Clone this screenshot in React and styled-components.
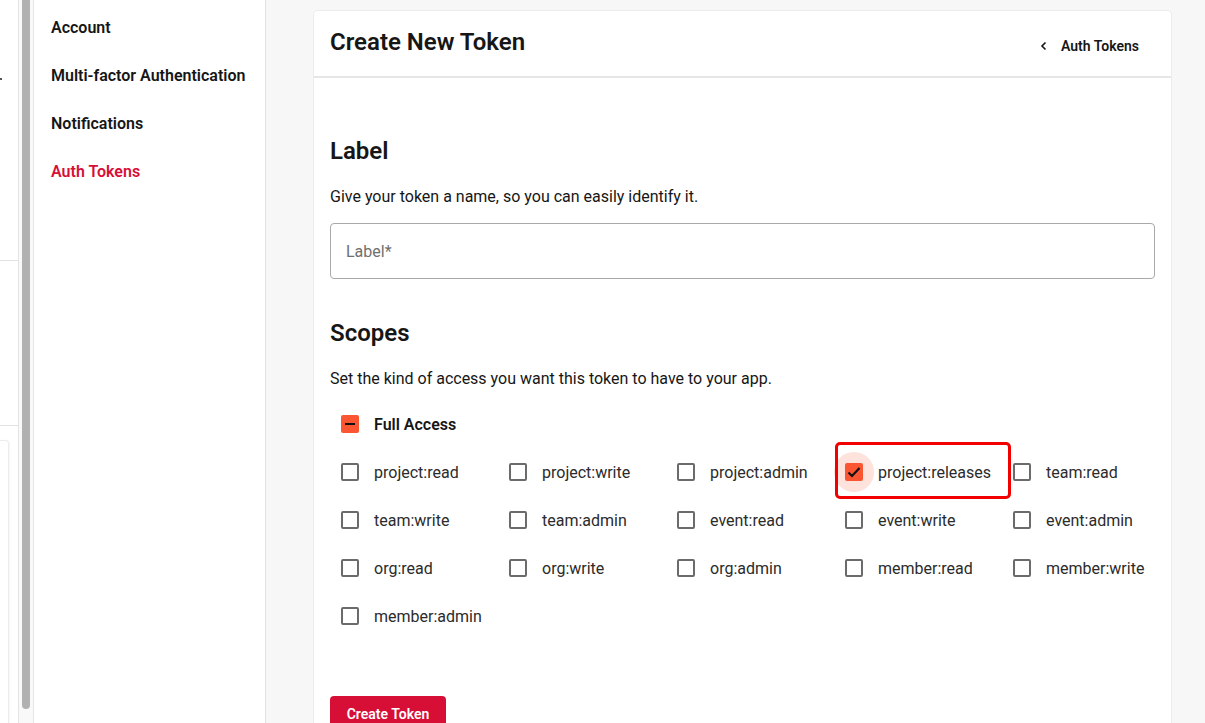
import React from "react";
import styled, { createGlobalStyle } from "styled-components";

const GlobalStyle = createGlobalStyle`
  html, body { margin: 0; padding: 0; }
  body {
    font-family: Roboto, "Liberation Sans", sans-serif;
    color: #161616;
    background: #f7f7f7;
    overflow: hidden;
  }
  * { box-sizing: border-box; }
`;

const Page = styled.div`
  display: flex;
  height: 723px;
  width: 1205px;
  overflow: hidden;
`;

const EdgeStrip = styled.div`
  width: 19px;
  flex: none;
  background: #fff;
  border-right: 1px solid #e4e4e4;
  display: flex;
  flex-direction: column;
`;

const EdgeSection = styled.div`
  height: ${(p) => p.$h}px;
  border-bottom: ${(p) => (p.$line ? "1px solid #e2e2e2" : "none")};
  position: relative;
`;

const EdgeDot = styled.span`
  position: absolute;
  left: 0;
  top: 78px;
  width: 2px;
  height: 2px;
  background: #555;
`;

const EdgeCard = styled.div`
  margin-top: 14px;
  width: 9px;
  flex: 1;
  border-top: 1px solid #ececec;
  border-right: 1px solid #ececec;
  border-top-right-radius: 4px;
  box-shadow: 1px 0 2px rgba(0, 0, 0, 0.04);
`;

const ScrollTrack = styled.div`
  width: 15px;
  flex: none;
  background: #f9f9f9;
  border-right: 1px solid #e6e6e6;
  padding: 0 3px 0 3px;
`;

const ScrollThumb = styled.div`
  width: 8px;
  height: 709px;
  background: #b1b1b1;
  border-radius: 0 0 4px 4px;
`;

const Sidebar = styled.nav`
  width: 232px;
  flex: none;
  background: #fff;
  border-right: 1px solid #e2e2e2;
  padding: 3px 0 0 17px;
  display: flex;
  flex-direction: column;
`;

const NavItem = styled.a`
  height: 48px;
  display: flex;
  align-items: center;
  font-size: 16px;
  font-weight: 600;
  color: ${(p) => (p.$active ? "#d70f37" : "#161616")};
  text-decoration: none;
  cursor: pointer;
`;

const Main = styled.main`
  flex: 1;
  min-width: 0;
  padding: 11px 34px 0 48px;
  background: #f7f7f7;
`;

const Card = styled.section`
  background: #fff;
  border-radius: 4px;
  box-shadow: 0 0 0 1px #ececec, 0 1px 2px rgba(0, 0, 0, 0.04);
  height: 760px;
`;

const CardHeader = styled.header`
  height: 67px;
  display: flex;
  align-items: center;
  justify-content: space-between;
  padding: 0 32px 0 16px;
  border-bottom: 2px solid #e6e6e6;
`;

const Title = styled.h1`
  margin: 0;
  font-size: 24px;
  font-weight: 600;
  line-height: 32px;
  margin-top: -4px;
`;

const BackLink = styled.a`
  display: flex;
  align-items: center;
  gap: 13px;
  font-size: 14px;
  font-weight: 600;
  color: #161616;
  padding: 4px 0;
  margin-top: 4px;
  cursor: pointer;
`;

const CardBody = styled.div`
  padding: 57px 16px 0;
  display: flex;
  flex-direction: column;
`;

const SectionTitle = styled.h2`
  margin: 0;
  font-size: 24px;
  font-weight: 600;
  line-height: 32px;
`;

const Description = styled.p`
  margin: 18px 0 0;
  font-size: 16px;
  line-height: 24px;
  font-weight: 400;
`;

const TextInput = styled.input`
  margin-top: 14px;
  height: 56px;
  width: 100%;
  border: 1px solid #a9a9a9;
  border-radius: 4px;
  padding: 0 15px;
  font-family: inherit;
  font-size: 16px;
  color: #161616;
  outline: none;
  &::placeholder { color: #6f6f6f; }
`;

const ScopesTitle = styled(SectionTitle)`
  margin-top: 38px;
`;

const FullRow = styled.div`
  margin-top: 9px;
  height: 48px;
  display: flex;
  align-items: center;
`;

const ScopeGrid = styled.div`
  display: grid;
  grid-template-columns: repeat(5, 168px);
  grid-auto-rows: 48px;
`;

const ScopeItem = styled.label`
  position: relative;
  display: flex;
  align-items: center;
  font-size: 16px;
  color: #2b2b2b;
  cursor: pointer;
`;

const FullLabel = styled.span`
  font-size: 16px;
  font-weight: 600;
  color: #161616;
`;

const BoxWrap = styled.span`
  width: 40px;
  height: 40px;
  flex: none;
  margin-right: 4px;
  border-radius: 50%;
  display: flex;
  align-items: center;
  justify-content: center;
  background: ${(p) => (p.$ripple ? "#fde3dc" : "transparent")};
`;

const Box = styled.span`
  width: 18px;
  height: 18px;
  border-radius: 2px;
  display: flex;
  align-items: center;
  justify-content: center;
  border: ${(p) => (p.$on ? "none" : "2px solid #6b6b6b")};
  background: ${(p) => (p.$on ? "#fc5531" : "#fff")};
`;

const Highlight = styled.span`
  position: absolute;
  left: 1px;
  top: -6px;
  width: 176px;
  height: 57px;
  border: 3px solid #f20000;
  border-radius: 5px;
  pointer-events: none;
`;

const CreateButton = styled.button`
  margin-top: 56px;
  align-self: flex-start;
  width: 116px;
  height: 36px;
  border: none;
  border-radius: 4px;
  background: #d70f37;
  color: #fff;
  font-family: inherit;
  font-size: 14px;
  font-weight: 600;
  padding: 0;
  cursor: pointer;
`;

const Check = () => (
  <svg width="16" height="16" viewBox="0 0 16 16">
    <path d="M2.5 8.5 L6 12 L13.5 4" fill="none" stroke="#111" strokeWidth="2.2" />
  </svg>
);

const Dash = () => (
  <svg width="14" height="14" viewBox="0 0 14 14">
    <path d="M2 7 H12" stroke="#111" strokeWidth="2" />
  </svg>
);

const Chevron = () => (
  <svg width="8" height="10" viewBox="0 0 8 10">
    <path d="M5.5 1.5 L2 5 L5.5 8.5" fill="none" stroke="#161616" strokeWidth="1.6" />
  </svg>
);

const scopes = [
  "project:read", "project:write", "project:admin", "project:releases", "team:read",
  "team:write", "team:admin", "event:read", "event:write", "event:admin",
  "org:read", "org:write", "org:admin", "member:read", "member:write",
  "member:admin",
];

export default function App() {
  return (
    <>
      <GlobalStyle />
      <Page>
        <EdgeStrip>
          <EdgeSection $h={261} $line>
            <EdgeDot />
          </EdgeSection>
          <EdgeSection $h={165} $line />
          <EdgeCard />
        </EdgeStrip>
        <ScrollTrack>
          <ScrollThumb />
        </ScrollTrack>
        <Sidebar>
          <NavItem>Account</NavItem>
          <NavItem>Multi-factor Authentication</NavItem>
          <NavItem>Notifications</NavItem>
          <NavItem $active>Auth Tokens</NavItem>
        </Sidebar>
        <Main>
          <Card>
            <CardHeader>
              <Title>Create New Token</Title>
              <BackLink>
                <Chevron />
                Auth Tokens
              </BackLink>
            </CardHeader>
            <CardBody>
              <SectionTitle>Label</SectionTitle>
              <Description>Give your token a name, so you can easily identify it.</Description>
              <TextInput placeholder="Label*" />
              <ScopesTitle>Scopes</ScopesTitle>
              <Description>Set the kind of access you want this token to have to your app.</Description>
              <FullRow>
                <BoxWrap>
                  <Box $on>
                    <Dash />
                  </Box>
                </BoxWrap>
                <FullLabel>Full Access</FullLabel>
              </FullRow>
              <ScopeGrid>
                {scopes.map((s) => {
                  const on = s === "project:releases";
                  return (
                    <ScopeItem key={s}>
                      <BoxWrap $ripple={on}>
                        <Box $on={on}>{on && <Check />}</Box>
                      </BoxWrap>
                      {s}
                      {on && <Highlight />}
                    </ScopeItem>
                  );
                })}
              </ScopeGrid>
              <CreateButton>Create Token</CreateButton>
            </CardBody>
          </Card>
        </Main>
      </Page>
    </>
  );
}
